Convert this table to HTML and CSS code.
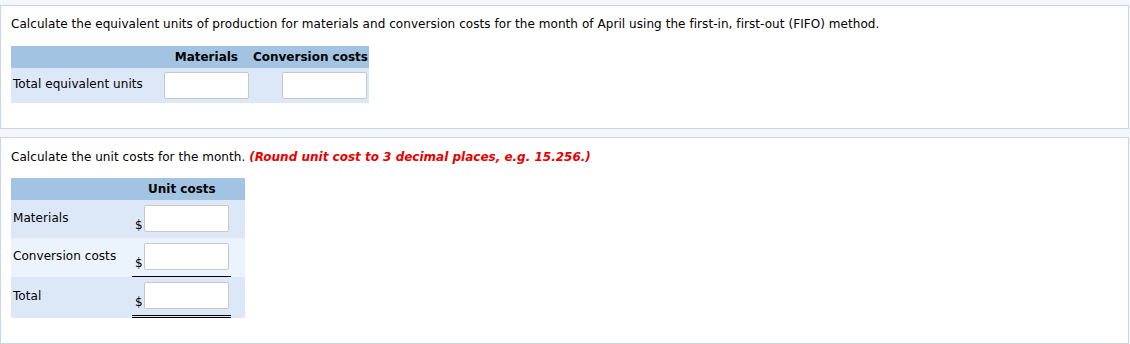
FILE: index.html
```html
<!DOCTYPE html>
<html>
<head>
<meta charset="utf-8">
<link rel="stylesheet" href="styles.css">
</head>
<body>
<div class="page">
  <section class="panel panel-one">
    <p class="prompt">Calculate the equivalent units of production for materials and conversion costs for the month of April using the first-in, first-out (FIFO) method.</p>
    <div class="eq-table">
      <div class="eq-head">
        <div class="c-label"></div>
        <div class="c-mat">Materials</div>
        <div class="c-conv">Conversion costs</div>
      </div>
      <div class="eq-row">
        <div class="c-label">Total equivalent units</div>
        <div class="c-mat"><span class="box"></span></div>
        <div class="c-conv"><span class="box"></span></div>
      </div>
    </div>
  </section>
  <section class="panel panel-two">
    <p class="prompt">Calculate the unit costs for the month. <em class="note">(Round unit cost to 3 decimal places, e.g. 15.256.)</em></p>
    <div class="uc-table">
      <div class="uc-head">
        <div class="u-label"></div>
        <div class="u-val">Unit costs</div>
      </div>
      <div class="uc-row r1">
        <div class="u-label">Materials</div>
        <div class="u-val"><span class="dollar">$</span><span class="box"></span></div>
      </div>
      <div class="uc-row r2">
        <div class="u-label">Conversion costs</div>
        <div class="u-val single"><span class="dollar">$</span><span class="box"></span></div>
      </div>
      <div class="uc-row r3">
        <div class="u-label">Total</div>
        <div class="u-val double"><span class="dollar">$</span><span class="box"></span></div>
      </div>
    </div>
  </section>
</div>
</body>
</html>
```

FILE: styles.css
```css
* { box-sizing: border-box; }
html, body { margin: 0; padding: 0; }
body {
  background: #f3f7fb;
  font-family: "DejaVu Sans", Verdana, sans-serif;
  font-size: 12px;
  letter-spacing: 0.06px;
  color: #000;
}
.page {
  width: 1130px;
  height: 344px;
  padding-top: 5px;
  padding-right: 1px;
}
.panel {
  background: #fff;
  border: 1px solid #c9d5e1;
  padding-left: 10px;
}
.panel-one {
  height: 124px;
  padding-top: 11px;
}
.panel-two {
  margin-top: 8px;
  height: 207px;
  padding-top: 12px;
}
.prompt {
  margin: 0;
  line-height: 14px;
}
.note {
  color: #e60000;
  font-weight: bold;
  font-style: italic;
  letter-spacing: 0;
}

/* table 1 */
.eq-table {
  margin-top: 15px;
  width: 358px;
}
.eq-head, .eq-row {
  display: grid;
  grid-template-columns: 145px 95px 118px;
}
.eq-head {
  background: #a2c4e2;
  height: 22px;
  align-items: center;
  font-weight: bold;
  line-height: 14px;
  letter-spacing: 0;
}
.eq-row {
  background: #dce8f7;
  height: 35px;
  align-items: center;
  line-height: 14px;
}
.eq-head .c-mat { text-align: right; padding-right: 13px; }
.eq-head .c-conv { text-align: right; padding-right: 1px; }
.eq-row .c-label { padding-left: 2px; padding-bottom: 4px; }
.eq-row .c-mat { padding-left: 8px; }
.eq-row .c-conv { padding-left: 31px; }
.box {
  display: inline-block;
  width: 85px;
  height: 27px;
  background: #fff;
  border: 1px solid #c8c8c8;
  border-radius: 2px;
  vertical-align: bottom;
}
.eq-row .box { display: block; }

/* table 2 */
.uc-table {
  margin-top: 14px;
  width: 234px;
  line-height: 14px;
}
.uc-head, .uc-row {
  display: grid;
  grid-template-columns: 120px 114px;
}
.uc-head {
  background: #a2c4e2;
  height: 22px;
  align-items: center;
  font-weight: bold;
  letter-spacing: 0;
}
.uc-head .u-val { padding-left: 17px; }
.uc-row { background: #dce8f7; }
.uc-row.r1 { height: 38px; }
.uc-row.r2 { height: 39px; background: #ebf3fd; }
.uc-row.r3 { height: 41px; }
.u-label { padding-left: 2px; }
.uc-row .u-label { padding-top: 11px; }
.uc-row.r3 .u-label { padding-top: 12px; }
.u-val {
  display: flex;
  align-items: flex-end;
  margin-left: 1px;
  width: 99px;
  padding-top: 5px;
  height: 32px;
}
.dollar {
  width: 12px;
  padding-left: 3px;
  line-height: 13px;
  font-weight: normal;
}
.uc-head .u-val { display: block; height: auto; padding-top: 0; margin: 0; width: auto; }
.u-val.single { border-bottom: 1px solid #000; height: 39px; padding-top: 5px; padding-bottom: 6px; }
.u-val.double { border-bottom: 3px double #000; height: 41px; padding-top: 5px; padding-bottom: 6px; }
```
